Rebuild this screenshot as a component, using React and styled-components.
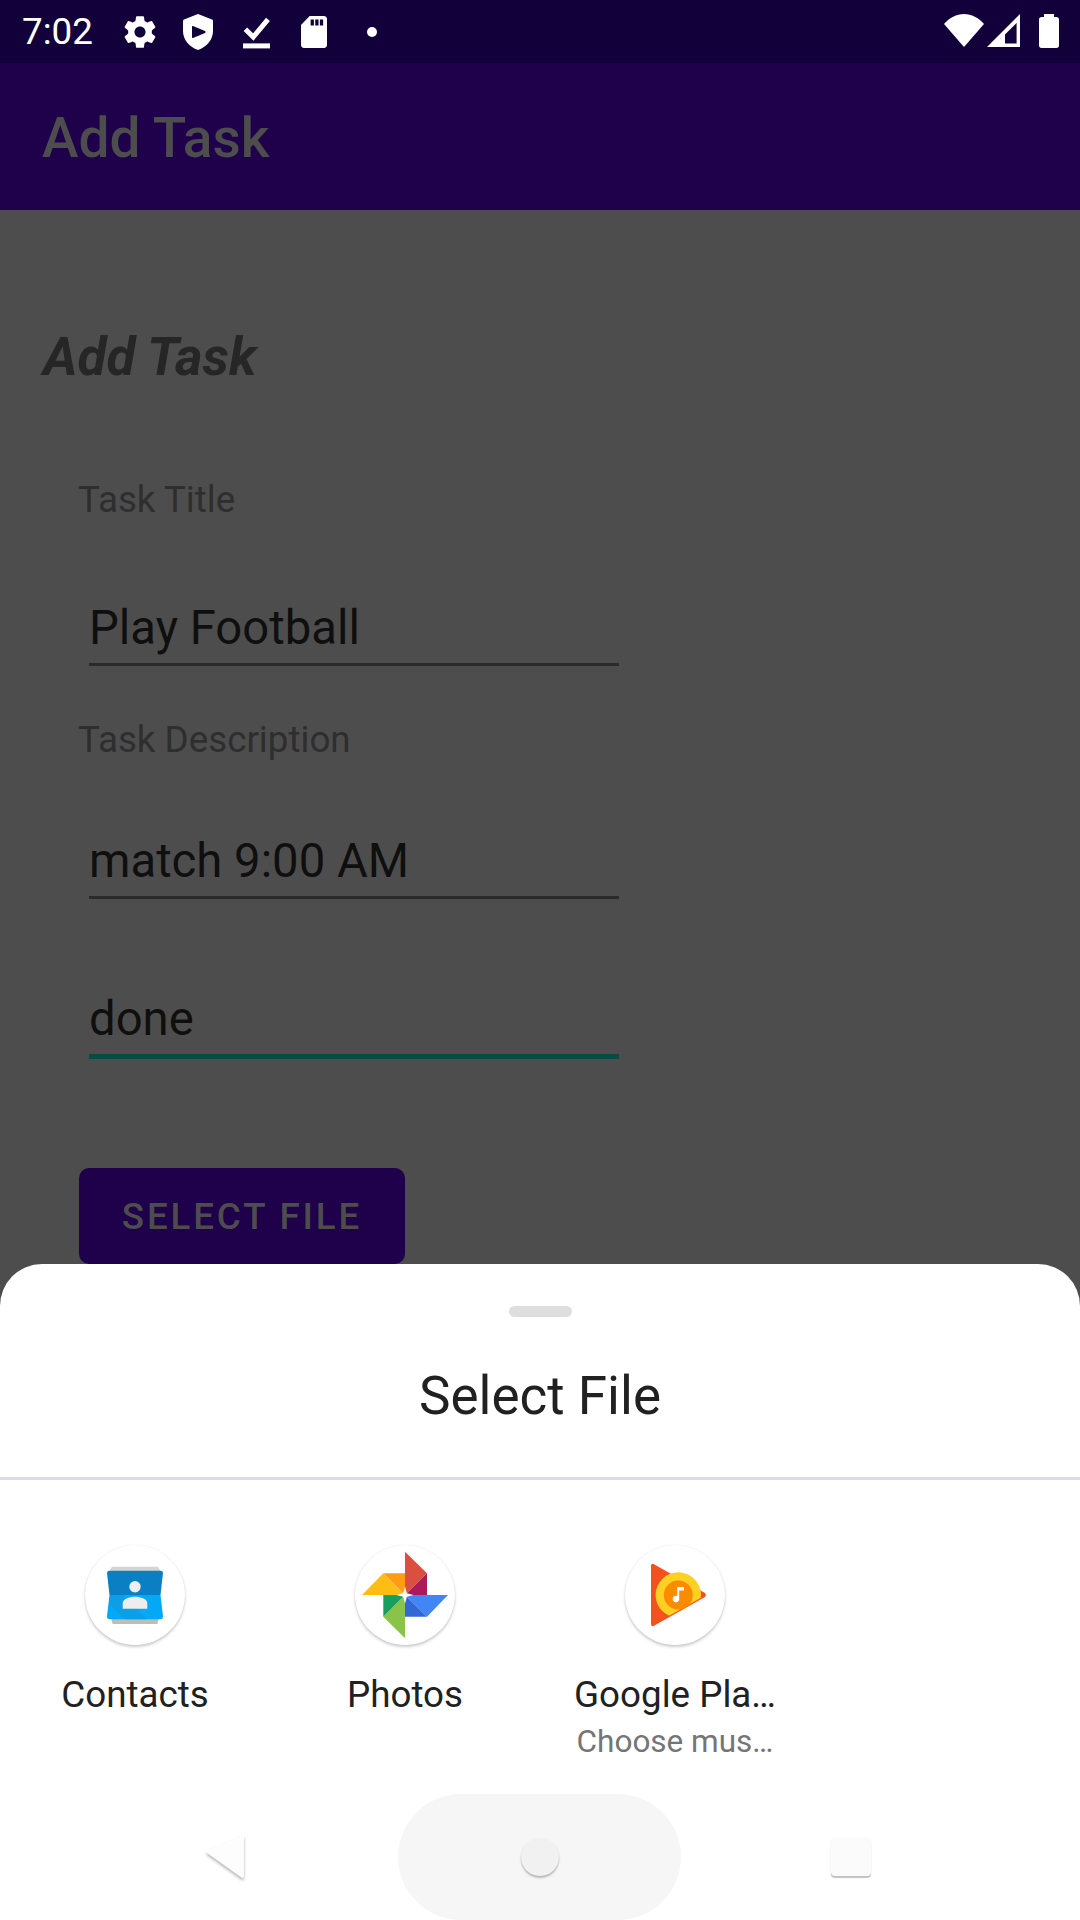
import React from "react";
import styled, { createGlobalStyle } from "styled-components";

const GlobalStyle = createGlobalStyle`
  html, body {
    margin: 0;
    padding: 0;
    background: #4d4d4d;
  }
  * {
    box-sizing: border-box;
  }
`;

const Screen = styled.div`
  position: relative;
  width: 1080px;
  height: 1920px;
  overflow: hidden;
  background: #4d4d4d;
  font-family: Roboto, "Liberation Sans", sans-serif;
`;

const StatusBar = styled.div`
  height: 63px;
  background: #12003a;
  display: flex;
  align-items: center;
  padding-left: 22px;
  color: #fff;
`;

const Clock = styled.div`
  width: 99px;
  font-size: 36.75px;
  line-height: 44px;
`;

const StatusIcons = styled.div`
  display: flex;
  align-items: center;
  height: 63px;
`;

const StatusIcon = styled.svg`
  display: block;
  flex: none;
  margin-left: ${(p) => p.$left}px;
`;

const StatusRight = styled.div`
  margin-left: auto;
  display: flex;
  align-items: center;
  padding: 0 21px 2px 0;
`;

const AppBar = styled.div`
  height: 147px;
  background: #1f004a;
  display: flex;
  align-items: center;
  padding: 3px 0 0 42px;
  color: #4d4d4d;
  font-size: 55px;
  font-weight: 500;
  line-height: 60px;
`;

const Content = styled.div`
  padding: 117px 0 0 42px;
`;

const Heading = styled.div`
  margin-left: 1px;
  font-size: 53px;
  line-height: 60px;
  font-weight: 700;
  font-style: italic;
  color: #262626;
`;

const Label = styled.div`
  margin: ${(p) => p.$top}px 0 0 36px;
  font-size: 36.75px;
  line-height: 44px;
  color: #2e2e2e;
`;

const Input = styled.div`
  width: 530px;
  margin: ${(p) => p.$top}px 0 0 47px;
  padding: 0 0 7px 0;
  font-size: 47.25px;
  line-height: 56px;
  color: #0f0f0f;
  border-bottom: ${(p) => (p.$focused ? "5px solid #0a4a45" : "3px solid #2a2a2a")};
`;

const Button = styled.div`
  width: 326px;
  height: 96px;
  margin: 109px 0 0 37px;
  background: #1f004a;
  border-radius: 10px;
  display: flex;
  align-items: center;
  justify-content: center;
  color: #4d4d4d;
  font-size: 36.75px;
  font-weight: 500;
  letter-spacing: 2.85px;
`;

const Sheet = styled.div`
  position: absolute;
  left: 0;
  right: 0;
  bottom: 0;
  height: 656px;
  background: #fff;
  border-radius: 42px 42px 0 0;
  display: flex;
  flex-direction: column;
`;

const Handle = styled.div`
  width: 63px;
  height: 11px;
  margin: 42px auto 0;
  border-radius: 6px;
  background: #dedede;
`;

const SheetTitle = styled.div`
  margin-top: 49px;
  padding-bottom: 51px;
  border-bottom: 3px solid #dcdae0;
  text-align: center;
  font-size: 53px;
  line-height: 60px;
  color: #212121;
`;

const AppGrid = styled.div`
  display: grid;
  grid-template-columns: repeat(4, 270px);
  padding-top: 65px;
`;

const AppItem = styled.div`
  display: flex;
  flex-direction: column;
  align-items: center;
`;

const AppIcon = styled.div`
  width: 100px;
  height: 100px;
  border-radius: 50%;
  background: #fff;
  box-shadow: 0 2px 3px rgba(0, 0, 0, 0.2), 0 0 1px rgba(0, 0, 0, 0.12);
  margin-bottom: 28px;

  svg {
    display: block;
  }
`;

const AppName = styled.div`
  text-align: center;
  font-size: 36.75px;
  line-height: 44px;
  color: #212121;
  white-space: nowrap;
`;

const AppSub = styled.div`
  margin-top: 4.5px;
  text-align: center;
  font-size: 31.5px;
  line-height: 40px;
  color: #757575;
  white-space: nowrap;
`;

const NavBar = styled.div`
  margin-top: auto;
  height: 126px;
  display: grid;
  grid-template-columns: 398px 283px 1fr;
  align-items: center;
`;

const BackSlot = styled.div`
  display: flex;
  justify-content: flex-end;
  padding-right: 154px;

  svg {
    display: block;
    filter: drop-shadow(0 2px 1.5px rgba(0, 0, 0, 0.3));
  }
`;

const HomePill = styled.div`
  height: 126px;
  border-radius: 63px;
  background: #f6f6f6;
  display: flex;
  align-items: center;
  justify-content: center;
`;

const HomeDot = styled.div`
  width: 38px;
  height: 38px;
  border-radius: 50%;
  background: #f1f1f1;
  box-shadow: 0 2px 2px rgba(0, 0, 0, 0.25);
`;

const RecentSlot = styled.div`
  padding-left: 150px;
`;

const RecentSquare = styled.div`
  width: 40px;
  height: 38px;
  border-radius: 4px;
  background: #fbfbfb;
  box-shadow: 0 2px 1px rgba(0, 0, 0, 0.24), 0 0 1px rgba(0, 0, 0, 0.08);
`;

function GearIcon() {
  return (
    <StatusIcon $left={0} width="38" height="38" viewBox="0 0 24 24" fill="#fff">
      <path d="M19.43 12.98c.04-.32.07-.64.07-.98s-.03-.66-.07-.98l2.11-1.65c.19-.15.24-.42.12-.64l-2-3.46c-.12-.22-.39-.3-.61-.22l-2.49 1c-.52-.4-1.08-.73-1.69-.98l-.38-2.65C14.46 2.18 14.25 2 14 2h-4c-.25 0-.46.18-.49.42l-.38 2.65c-.61.25-1.17.59-1.69.98l-2.49-1c-.23-.09-.49 0-.61.22l-2 3.46c-.13.22-.07.49.12.64l2.11 1.65c-.04.32-.07.65-.07.98s.03.66.07.98l-2.11 1.65c-.19.15-.24.42-.12.64l2 3.46c.12.22.39.3.61.22l2.49-1c.52.4 1.08.73 1.69.98l.38 2.65c.03.24.24.42.49.42h4c.25 0 .46-.18.49-.42l.38-2.65c.61-.25 1.17-.59 1.69-.98l2.49 1c.23.09.49 0 .61-.22l2-3.46c.12-.22.07-.49-.12-.64l-2.11-1.65zM12 15.5c-1.93 0-3.5-1.57-3.5-3.5s1.57-3.5 3.5-3.5 3.5 1.57 3.5 3.5-1.57 3.5-3.5 3.5z" />
    </StatusIcon>
  );
}

function ShieldIcon() {
  return (
    <StatusIcon $left={24} width="30" height="36" viewBox="0 0 30 36" fill="#fff">
      <path
        fillRule="evenodd"
        d="M15 0 L29 5.5 C29.6 5.8 30 6.2 30 7 V17 C30 26 23.5 33 15 36 C6.5 33 0 26 0 17 V7 C0 6.2 .4 5.8 1 5.5 Z M10 12 C9.4 11.7 9 12 9 12.7 V23.3 C9 24 9.4 24.3 10 24 L22 18.9 C22.8 18.4 22.8 17.6 22 17.1 Z"
      />
    </StatusIcon>
  );
}

function DoneIcon() {
  return (
    <StatusIcon $left={30} width="27" height="34" viewBox="0 -2 27 34" fill="none">
      <path d="M2.4 12.2 L10.3 20 L25 2.4" stroke="#fff" strokeWidth="5" />
      <rect x="0" y="26.4" width="27" height="5" fill="#fff" />
    </StatusIcon>
  );
}

function SdIcon() {
  return (
    <StatusIcon $left={31} width="26" height="32" viewBox="0 0 27 32" preserveAspectRatio="none" fill="#fff">
      <path
        fillRule="evenodd"
        d="M9 0 H24 C25.6 0 27 1.4 27 3 V29 C27 30.6 25.6 32 24 32 H3 C1.4 32 0 30.6 0 29 V9 Z M10 3.4 V9.4 H13.4 V3.4 Z M14.8 3.4 V9.4 H18.2 V3.4 Z M19.6 3.4 V9.4 H23 V3.4 Z"
      />
    </StatusIcon>
  );
}

function DotIcon() {
  return (
    <StatusIcon $left={40} width="10" height="10" viewBox="0 0 10 10" fill="#fff">
      <circle cx="5" cy="5" r="5" />
    </StatusIcon>
  );
}

function WifiIcon() {
  return (
    <StatusIcon $left={0} width="40" height="33" viewBox="0 0 40 33" fill="#fff">
      <path d="M20 33 L0 10 C5.5 3.8 12.4 0 20 0 C27.6 0 34.5 3.8 40 10 Z" />
    </StatusIcon>
  );
}

function SignalIcon() {
  return (
    <StatusIcon $left={3} width="33" height="33" viewBox="0 0 33 33" fill="#fff">
      <path
        fillRule="evenodd"
        d="M0 33 L33 0 V33 Z M18 29.6 H29.6 V9 L18 20.6 Z"
      />
    </StatusIcon>
  );
}

function BatteryIcon() {
  return (
    <StatusIcon $left={19} width="20" height="34" viewBox="0 0 20 34" fill="#fff">
      <path d="M5 0 H15 V3 H17.5 C19 3 20 4 20 5.5 V31.5 C20 33 19 34 17.5 34 H2.5 C1 34 0 33 0 31.5 V5.5 C0 4 1 3 2.5 3 H5 Z" />
    </StatusIcon>
  );
}

function ContactsLogo() {
  return (
    <svg width="100" height="100" viewBox="0 0 100 100">
      <path d="M27 21.7 H73 L76 27 H24 Z" fill="#d4d4d4" />
      <path d="M26 72 H74 L72.6 78.5 Q72 79 71 79 H29 Q28 79 27.4 78.5 Z" fill="#bdbdbd" />
      <path d="M24.5 25.7 H75.5 Q78 25.7 78 28 L75.5 50 H24.5 L22 28 Q22 25.7 24.5 25.7 Z" fill="#0b7fc4" />
      <path d="M24.5 50 H75.5 L78 71 Q78 74.3 75.5 74.3 H24.5 Q22 74.3 22 71 Z" fill="#03a9f4" />
      <path d="M25 50 H38 L62 74.3 H40 L24 59 Z" fill="#0c9fe6" />
      <circle cx="50" cy="41.7" r="5.7" fill="#eeeeee" />
      <path d="M37.7 63.7 V58 C37.7 54 44 51.7 50 51.7 C56 51.7 62.3 54 62.3 58 V63.7 Z" fill="#eeeeee" />
    </svg>
  );
}

function PhotosLogo() {
  return (
    <svg width="100" height="100" viewBox="0 0 100 100">
      <path d="M50 6.7 L72 28.3 L50 50 Z" fill="#db4f40" />
      <path d="M72 28.3 V50 H50 Z" fill="#ad1a5b" />
      <path d="M50 50 H93 L72 71.7 Z" fill="#4285f4" />
      <path d="M50 50 L72 71.7 H50 Z" fill="#3367d6" />
      <path d="M50 50 V93.3 L28.3 71.7 Z" fill="#8bc34a" />
      <path d="M50 50 L28.3 71.7 V50 Z" fill="#17a05d" />
      <path d="M50 50 H7 L28.3 28.3 Z" fill="#fdbd13" />
      <path d="M50 50 L28.3 28.3 H50 Z" fill="#ff9d12" />
      <path d="M50 41.5 L51.8 48.2 L58.5 50 L51.8 51.8 L50 58.5 L48.2 51.8 L41.5 50 L48.2 48.2 Z" fill="#fff" />
    </svg>
  );
}

function PlayMusicLogo() {
  return (
    <svg width="100" height="100" viewBox="0 0 100 100">
      <defs>
        <clipPath id="playClip">
          <path d="M0 0 H100 V27 L81 50 L26 81 L0 81 Z" />
        </clipPath>
      </defs>
      <path
        d="M26 21 C26 19 27.6 18.4 29 19.2 L79.5 47.8 C81.4 49 81.4 51 79.5 52.2 L29 80.8 C27.6 81.6 26 81 26 79 Z"
        fill="#f4511e"
      />
      <g clipPath="url(#playClip)">
        <circle cx="53.3" cy="50" r="22.7" fill="#fdd023" />
      </g>
      <circle cx="53.3" cy="50" r="14.5" fill="#fb8c00" />
      <path d="M54.2 42 V54 A3.3 3.3 0 1 1 52.2 51 V42 Z M54.2 42 H59 V45.4 H54.2 Z" fill="#fff" />
    </svg>
  );
}

const apps = [
  { name: "Contacts", logo: <ContactsLogo /> },
  { name: "Photos", logo: <PhotosLogo /> },
  { name: "Google Pla…", sub: "Choose mus…", logo: <PlayMusicLogo /> },
];

export default function App() {
  return (
    <Screen>
      <GlobalStyle />
      <StatusBar>
        <Clock>7:02</Clock>
        <StatusIcons>
          <GearIcon />
          <ShieldIcon />
          <DoneIcon />
          <SdIcon />
          <DotIcon />
        </StatusIcons>
        <StatusRight>
          <WifiIcon />
          <SignalIcon />
          <BatteryIcon />
        </StatusRight>
      </StatusBar>
      <AppBar>Add Task</AppBar>
      <Content>
        <Heading>Add Task</Heading>
        <Label $top={91}>Task Title</Label>
        <Input $top={78}>Play Football</Input>
        <Label $top={52}>Task Description</Label>
        <Input $top={71}>match 9:00 AM</Input>
        <Input $top={92} $focused>done</Input>
        <Button>SELECT FILE</Button>
      </Content>
      <Sheet>
        <Handle />
        <SheetTitle>Select File</SheetTitle>
        <AppGrid>
          {apps.map((app) => (
            <AppItem key={app.name}>
              <AppIcon>{app.logo}</AppIcon>
              <AppName>{app.name}</AppName>
              {app.sub && <AppSub>{app.sub}</AppSub>}
            </AppItem>
          ))}
        </AppGrid>
        <NavBar>
          <BackSlot>
            <svg width="38" height="44" viewBox="0 0 38 44">
              <path d="M36 0.5 Q38 0 38 2 V41 Q38 43.5 36 43 L1 18 Q0 17 1 16 Z" fill="#fdfdfd" />
            </svg>
          </BackSlot>
          <HomePill>
            <HomeDot />
          </HomePill>
          <RecentSlot>
            <RecentSquare />
          </RecentSlot>
        </NavBar>
      </Sheet>
    </Screen>
  );
}
